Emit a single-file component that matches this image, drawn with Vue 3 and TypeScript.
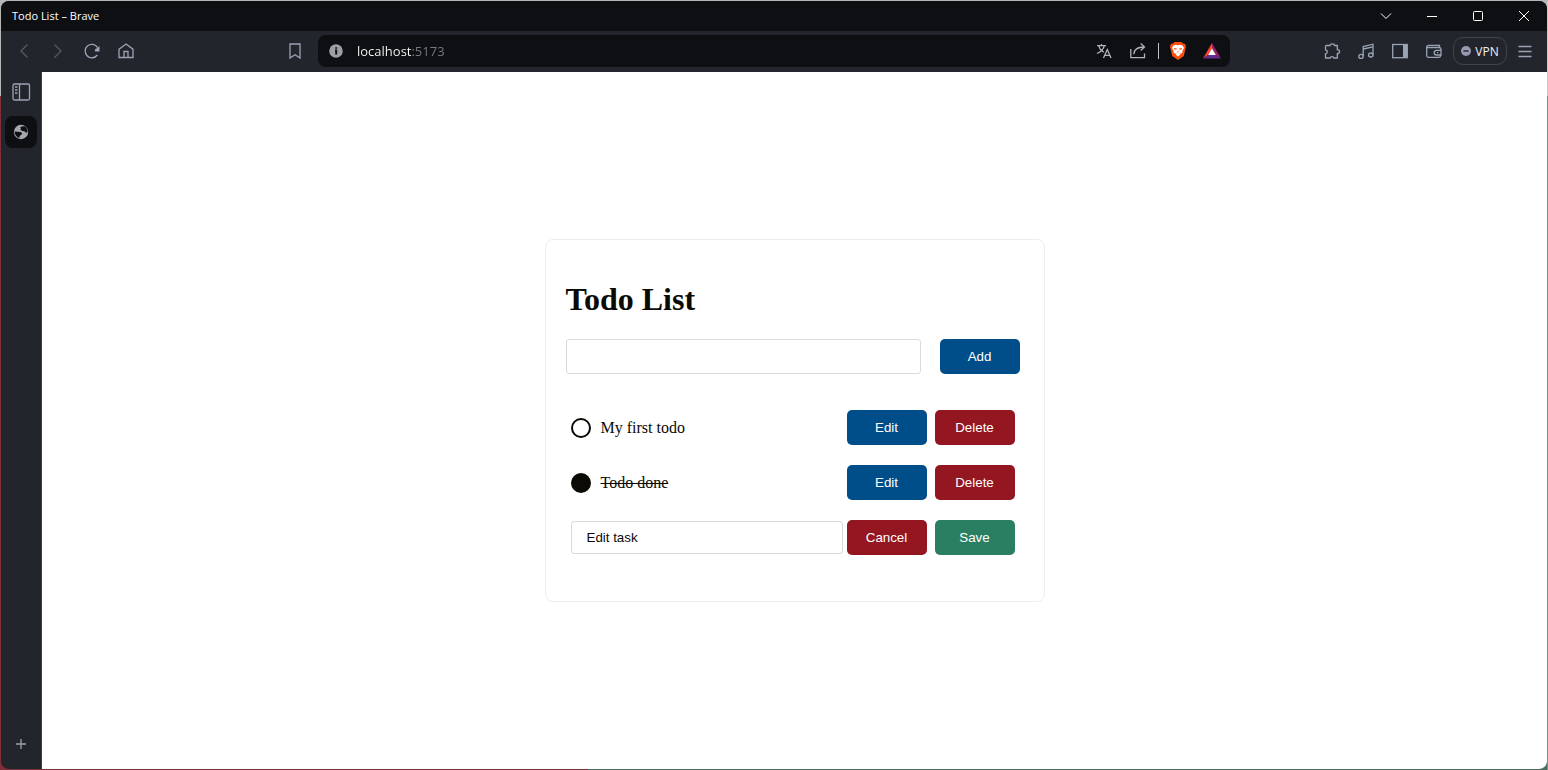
<script setup lang="ts">
import { ref } from 'vue'

interface Todo {
  id: number
  title: string
  done: boolean
  editing: boolean
}

const address = ref('localhost:5173')
const draft = ref('')
const todos = ref<Todo[]>([
  { id: 1, title: 'My first todo', done: false, editing: false },
  { id: 2, title: 'Todo done', done: true, editing: false },
  { id: 3, title: 'Edit task', done: false, editing: true },
])

function addTodo(): void {
  const title = draft.value.trim()
  if (!title) return
  todos.value.push({ id: Date.now(), title, done: false, editing: false })
  draft.value = ''
}

function removeTodo(id: number): void {
  todos.value = todos.value.filter((todo) => todo.id !== id)
}
</script>

<template>
  <div class="desktop">
    <div class="window">
      <header class="titlebar">
        <span class="title">Todo List – Brave</span>
        <div class="controls">
          <button type="button" aria-label="Search tabs">
            <svg viewBox="0 0 20 20"><path d="M5 7.5l5 5 5-5" /></svg>
          </button>
          <button type="button" aria-label="Minimize">
            <svg viewBox="0 0 20 20"><path d="M5 10.5h10" /></svg>
          </button>
          <button type="button" aria-label="Maximize">
            <svg viewBox="0 0 20 20"><rect x="5.5" y="5.5" width="9" height="9" rx="1" /></svg>
          </button>
          <button type="button" aria-label="Close">
            <svg viewBox="0 0 20 20"><path d="M5 5l10 10M15 5L5 15" /></svg>
          </button>
        </div>
      </header>

      <nav class="toolbar">
        <button type="button" class="icon dim" aria-label="Back">
          <svg viewBox="0 0 20 20"><path d="M13.5 3.5L7 10l6.500 6.500" /></svg>
        </button>
        <button type="button" class="icon dim" aria-label="Forward">
          <svg viewBox="0 0 20 20"><path d="M6.500 3.500L13 10l-6.500 6.500" /></svg>
        </button>
        <button type="button" class="icon" aria-label="Reload">
          <svg viewBox="0 0 20 20">
            <path d="M15.300 14A6.700 6.700 0 1 1 15.600 6.600" />
            <path class="solid" d="M17.500 5v5.500h-4.500c-.6-1.300.2-3 2-3.300z" />
          </svg>
        </button>
        <button type="button" class="icon" aria-label="Home">
          <svg viewBox="0 0 20 20">
            <path d="M3 8.200L10 3l7 5.200V16.500H3z" />
            <path d="M8 16.500V10.500h4v6" />
          </svg>
        </button>

        <button type="button" class="icon bookmark" aria-label="Bookmark">
          <svg viewBox="0 0 20 20"><path d="M5 3h10v14l-5-3.200L5 17z" /></svg>
        </button>
        <div class="addressbar">
          <button type="button" class="icon info" aria-label="Site information">
            <svg viewBox="0 0 20 20">
              <circle class="disc" cx="10" cy="10" r="6.800" />
              <path class="cut" d="M9 9.500H10.200V13.500M10.200 6.200v1.500" />
            </svg>
          </button>
          <input v-model="address" class="url" type="text" aria-label="Address" />
          <button type="button" class="icon pale" aria-label="Translate">
            <svg viewBox="0 0 20 20">
              <path d="M3 4.700h9M7.500 3v1.700M4.800 4.700c.8 3 3 5.500 5 6.500M10.300 4.700C9.500 8.500 6.500 11 3 12.500" />
              <path d="M9.500 17l3.800-8.500L17 17M10.800 14.300h5" />
            </svg>
          </button>
          <button type="button" class="icon pale" aria-label="Share">
            <svg viewBox="0 0 20 20">
              <path d="M2.800 8v8.700h13.700V12.500M5.800 13.200c0-4.500 3-7.200 10.500-7.200M12.700 2.500L16.500 6l-3.800 3.500" />
            </svg>
          </button>
          <span class="divider"></span>
          <button type="button" class="icon" aria-label="Brave Shields">
            <svg viewBox="0 0 20 20">
              <path fill="#ff4d0d" stroke="none" d="M6.500 1h7l1.500 1.500 2.200.5.800 3-.5 1.500-1.700 7.500L10 19l-5.800-4-1.700-7.500L2 6l.8-3L5 2.500z" />
              <path fill="#fff" stroke="none" d="M5.200 4.700l2.300-.9L10 4.300l2.500-.5 2.300.9 1.200 2.300-1.700 3 .2 1.500-1.800 1.200-1.500-.6 1.200 1.500-2.400 1.900-2.400-1.900 1.200-1.500-1.500.6-1.800-1.200.2-1.500L4 7z" />
              <path fill="#ff4d0d" stroke="none" d="M6 7l3 .6-.7 1.200-2-.5zM14 7l-3 .6.700 1.200 2-.5zM9 10.500h2l-1 1.200z" />
            </svg>
          </button>
          <button type="button" class="icon" aria-label="Brave Rewards">
            <svg viewBox="0 0 20 20">
              <path fill="#ff4724" stroke="none" d="M10 2v5.500L6 14l-5 3.500z" />
              <path fill="#9e1f63" stroke="none" d="M10 2l9 15.500L14 14l-4-6.500z" />
              <path fill="#662d91" stroke="none" d="M1 17.500L6 14h8l5 3.500z" />
              <path fill="#fff" stroke="none" d="M10 7.300l3.900 6.700H6.100z" />
            </svg>
          </button>
        </div>

        <button type="button" class="icon" aria-label="Extensions">
          <svg viewBox="0 0 20 20">
            <path d="M4.500 4.500H8C8 2.300 12.500 2.300 12.500 4.500H15.300V8.700C18.300 9 18.300 12.500 15.300 12.700V17H11.800C11.500 15.200 8.500 15.200 8.200 17H3.500V12.800C6 12.500 6 9.200 3.500 8.800V5.500a1 1 0 0 1 1-1z" />
          </svg>
        </button>
        <button type="button" class="icon" aria-label="Media">
          <svg viewBox="0 0 20 20">
            <path d="M7.200 15V5.500L17 3.200v10.500M7.200 8L17 5.900" />
            <ellipse cx="5" cy="15.400" rx="2.200" ry="2" />
            <ellipse cx="14.800" cy="14" rx="2.200" ry="2" />
          </svg>
        </button>
        <button type="button" class="icon" aria-label="Side panel">
          <svg viewBox="0 0 20 20">
            <rect x="2.700" y="3.500" width="14.500" height="13.200" />
            <path class="disc" d="M13 3.500h4.500v13H13z" />
          </svg>
        </button>
        <button type="button" class="icon" aria-label="Wallet">
          <svg viewBox="0 0 20 20">
            <path d="M15.500 6.500V4.500H4.200a1.500 1.500 0 0 0-1.500 1.500V14.800a1.500 1.500 0 0 0 1.500 1.500H15a1.500 1.500 0 0 0 1.500-1.500M3 6.700h12.500a1.500 1.500 0 0 1 1.500 1.500V14H12.500a2.200 2.200 0 0 1 0-4.600H17M13 11.700h1.200" />
          </svg>
        </button>
        <button type="button" class="vpn">
          <svg viewBox="0 0 10 10">
            <circle cx="5" cy="5" r="5" fill="#9699b0" />
            <path d="M2.500 5h5" stroke="#282b39" stroke-width="1.300" />
          </svg>
          VPN
        </button>
        <button type="button" class="icon" aria-label="Menu">
          <svg viewBox="0 0 20 20"><path d="M3.500 5.500h13M3.500 10.500h13M3.500 15.500h13" /></svg>
        </button>
      </nav>

      <div class="body">
        <aside class="sidebar">
          <button type="button" class="tile" aria-label="Toggle tabs">
            <svg viewBox="0 0 20 20">
              <rect x="2" y="2" width="16.500" height="16" rx="1.500" />
              <path d="M8.500 2v16M4 5h2.500M4 8h2.500M4 11h2.500" />
            </svg>
          </button>
          <button type="button" class="tile active" aria-label="Todo List">
            <svg viewBox="0 0 20 20">
              <circle cx="10" cy="10" r="7.200" fill="#a5a7ab" stroke="none" />
              <path fill="#0e0f13" stroke="none" d="M10.500 4.500l3-.2c2 1.200 3.200 3.500 3 6l-1.700.5-1.300-1.600-2-.2-2.200-1.200.8-1.300-1-.8z" />
              <path fill="#0e0f13" stroke="none" d="M3.500 9.500l3 .3 3.300.2 1.500 1.700-1.600 1.600-1 .5-.3 2.200c-2.500-.7-4.700-3-4.900-6.500z" />
            </svg>
          </button>
          <button type="button" class="tile new" aria-label="New tab">
            <svg viewBox="0 0 20 20"><path d="M5 10h10M10 5v10" /></svg>
          </button>
        </aside>

        <main class="page">
          <section class="card">
            <h1>Todo List</h1>
            <form class="add" @submit.prevent="addTodo">
              <input v-model="draft" class="field" type="text" aria-label="New todo" />
              <button type="submit" class="btn blue">Add</button>
            </form>
            <ul class="list">
              <li v-for="todo in todos" :key="todo.id" class="row">
                <template v-if="todo.editing">
                  <input v-model="todo.title" class="field edit" type="text" aria-label="Edit todo" />
                  <div class="actions">
                    <button type="button" class="btn red" @click="todo.editing = false">Cancel</button>
                    <button type="button" class="btn green" @click="todo.editing = false">Save</button>
                  </div>
                </template>
                <template v-else>
                  <label class="todo" :class="{ done: todo.done }">
                    <input v-model="todo.done" type="checkbox" class="check" />
                    <span>{{ todo.title }}</span>
                  </label>
                  <div class="actions">
                    <button type="button" class="btn blue" @click="todo.editing = true">Edit</button>
                    <button type="button" class="btn red" @click="removeTodo(todo.id)">Delete</button>
                  </div>
                </template>
              </li>
            </ul>
          </section>
        </main>
      </div>
    </div>
  </div>
</template>

<style>
body {
  margin: 0;
}
</style>

<style scoped>
.desktop {
  box-sizing: border-box;
  min-height: 100vh;
  padding: 1px;
  display: flex;
  background:
    linear-gradient(#b4b8b4, #b4b8b4) top / 100% 1px no-repeat,
    linear-gradient(#b4b8b4 96px, #7e2f38 96px) left / 38% 100% no-repeat,
    linear-gradient(#b4b8b4 96px, #47705f 96px) right / 62% 100% no-repeat;
}

.window {
  flex: 1;
  min-width: 0;
  display: flex;
  flex-direction: column;
  overflow: hidden;
  border-radius: 8px;
  background: #22252c;
  font-family: "Segoe UI", "Open Sans", "Noto Sans", sans-serif;
}

button {
  padding: 0;
  border: 0;
  background: none;
  cursor: pointer;
}

svg {
  display: block;
  fill: none;
}

.titlebar {
  height: 30px;
  display: flex;
  justify-content: space-between;
  align-items: center;
  padding-left: 11px;
  background: #0e0f13;
}

.title {
  padding-bottom: 2px;
  color: #fff;
  font-size: 11px;
}

.controls {
  display: flex;
}

.controls button {
  width: 46px;
  height: 30px;
  display: grid;
  place-items: center;
}

.controls svg {
  width: 20px;
  height: 20px;
  stroke: #fff;
  stroke-width: 1;
}

.toolbar {
  height: 40px;
  display: flex;
  align-items: center;
  padding: 0 5px 1px 6px;
}

.icon {
  width: 34px;
  height: 32px;
  flex: none;
  display: grid;
  place-items: center;
  color: #9ba4b5;
}

.icon svg,
.tile svg {
  width: 20px;
  height: 20px;
  stroke: currentColor;
  stroke-width: 1.3;
}

.icon .solid,
.icon .disc {
  fill: currentColor;
  stroke: none;
}

.icon .cut {
  stroke: #0e0f13;
  stroke-width: 2;
}

.dim {
  color: #555a65;
}

.pale {
  color: #b2b4b8;
}

.bookmark {
  margin-left: 135px;
}

.addressbar {
  flex: 1;
  min-width: 0;
  height: 32px;
  display: flex;
  align-items: center;
  margin: 0 85px 0 6px;
  padding: 0 1px;
  border-radius: 8px;
  background: #0e0f13;
}

.info {
  color: #9c9fa3;
}

.url {
  flex: 1;
  min-width: 0;
  height: 24px;
  margin: 0 0 0 4px;
  padding: 0;
  border: 0;
  outline: 0;
  font-family: inherit;
  font-size: 13px;
  color: transparent;
  caret-color: #fff;
  background: linear-gradient(90deg, #fff 55px, #777a82 55px);
  background-clip: text;
}

.divider {
  width: 1px;
  height: 16px;
  margin: 0 2px 0 3px;
  background: #c0c2c5;
}

.vpn {
  width: 54px;
  height: 28px;
  display: flex;
  align-items: center;
  justify-content: center;
  gap: 4px;
  margin: 0 1px 0 2px;
  border: 1px solid #414550;
  border-radius: 10px;
  color: #eef0f4;
  font-family: inherit;
  font-size: 12px;
}

.vpn svg {
  width: 10px;
  height: 10px;
}

.body {
  flex: 1;
  display: flex;
}

.sidebar {
  width: 40px;
  flex: none;
  display: flex;
  flex-direction: column;
  align-items: center;
  gap: 8px;
  padding: 4px 0 9px;
  box-sizing: border-box;
}

.tile {
  width: 32px;
  height: 32px;
  display: grid;
  place-items: center;
  border-radius: 8px;
  color: #9ba4b5;
}

.tile.active {
  background: #0e0f13;
}

.tile.new {
  margin-top: auto;
  color: #a0a1a5;
}

.page {
  flex: 1;
  min-width: 0;
  display: flex;
  align-items: center;
  justify-content: center;
  border-left: 1px solid #3b3d43;
  background: #fff;
  color: #0b0a05;
  font-family: "Liberation Serif", "Times New Roman", serif;
  font-size: 16px;
}

.card {
  box-sizing: border-box;
  width: 100%;
  max-width: 500px;
  padding: 20px 24px 20px 20px;
  border: 1px solid #ededed;
  border-radius: 8px;
}

h1 {
  margin: 21px 0;
  font-size: 32px;
  line-height: 37px;
}

.add {
  display: flex;
  gap: 19px;
  margin-bottom: 26px;
}

.field {
  box-sizing: border-box;
  flex: 1;
  min-width: 0;
  height: 35px;
  margin: 0;
  padding: 0 15px;
  border: 1px solid #dadada;
  border-radius: 3px;
  background: #fff;
  color: #0b0a05;
  font-family: "Liberation Sans", Arial, sans-serif;
}

.field.edit {
  height: 33px;
  margin-right: 4px;
}

.btn {
  width: 80px;
  height: 35px;
  flex: none;
  border-radius: 5px;
  color: #fff;
  font-family: "Liberation Sans", Arial, sans-serif;
}

.blue {
  background: #004e89;
}

.red {
  background: #931621;
}

.green {
  background: #2a7f62;
}

.list {
  margin: 0 0 16px;
  padding: 0;
  list-style: none;
}

.row {
  display: flex;
  align-items: center;
  padding: 10px 5px;
}

.todo {
  flex: 1;
  display: flex;
  align-items: center;
  gap: 10px;
}

.done span {
  text-decoration: line-through;
}

.check {
  appearance: none;
  box-sizing: border-box;
  width: 20px;
  height: 20px;
  margin: 0;
  border: 2px solid #0b0a05;
  border-radius: 50%;
}

.check:checked {
  background: #0b0a05;
}

.actions {
  display: flex;
  gap: 8px;
}
</style>
